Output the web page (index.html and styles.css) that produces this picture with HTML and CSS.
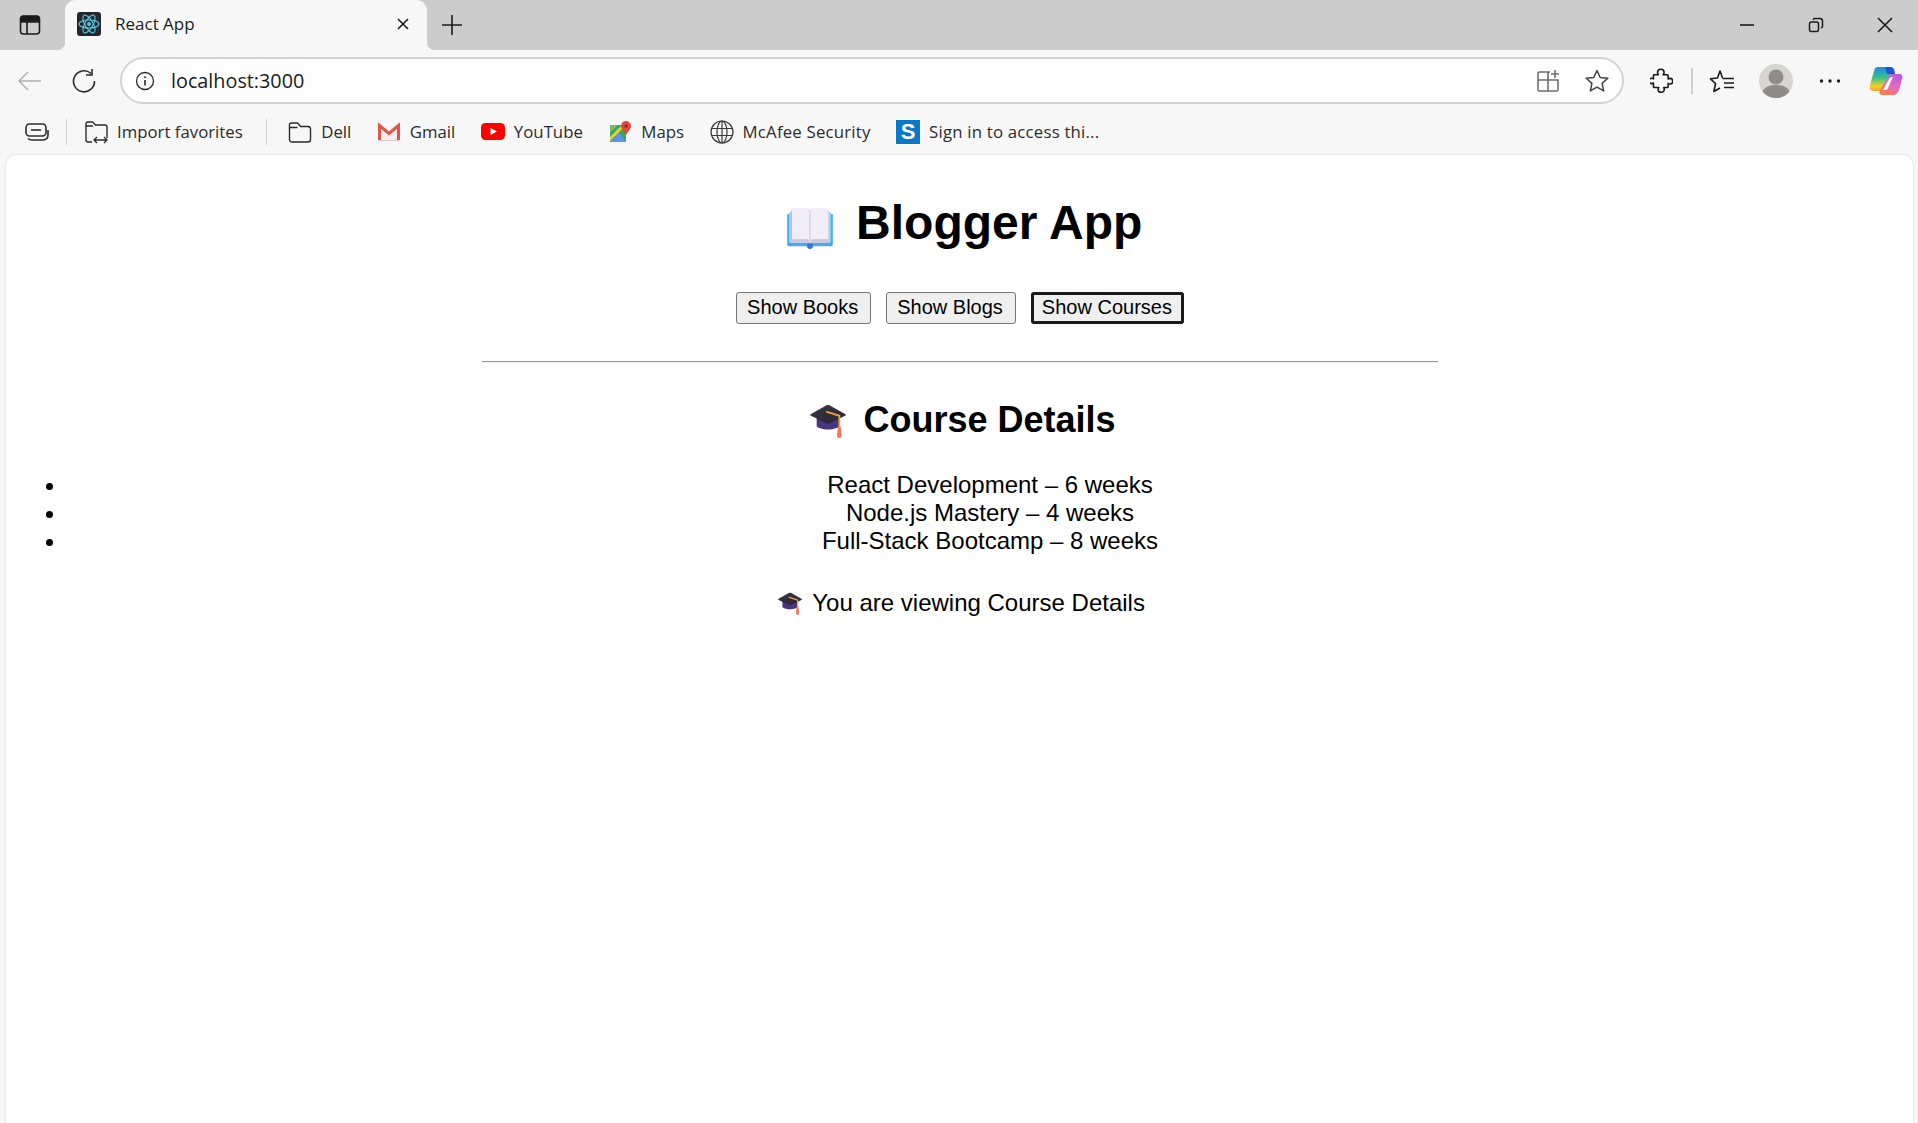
FILE: index.html
```html
<!DOCTYPE html>
<html lang="en">

<head>
    <meta charset="UTF-8">
    <title>React App</title>
    <link rel="stylesheet" href="styles.css">
</head>

<body>
    <!-- tab strip -->
    <div class="tabstrip">
        <span class="tab-side">
            <svg width="22" height="22" viewBox="0 0 22 22" fill="none" stroke="#1b1b1b" stroke-width="1.6"><rect x="1.5" y="2" width="19" height="18" rx="3"/><path d="M1.5 8h19M8 8v12"/><path d="M2 7V4.5A2 2 0 0 1 4 2.500h14a2 2 0 0 1 2 2V7z" fill="#1b1b1b"/></svg>
        </span>
        <div class="tab">
            <svg class="favicon" width="24" height="24" viewBox="0 0 24 24" fill="none"><rect width="24" height="24" rx="3" fill="#23272f"/><g stroke="#58c4dc" stroke-width="1.2"><ellipse cx="12" cy="12" rx="10" ry="4"/><ellipse cx="12" cy="12" rx="10" ry="4" transform="rotate(60 12 12)"/><ellipse cx="12" cy="12" rx="10" ry="4" transform="rotate(120 12 12)"/></g><circle cx="12" cy="12" r="2" fill="#58c4dc"/></svg>
            <span class="tab-title">React App</span>
            <svg class="tab-close" width="14" height="14" viewBox="0 0 14 14" stroke="#1b1b1b" stroke-width="1.6"><path d="M2 2l10 10M12 2L2 12"/></svg>
        </div>
        <svg class="tab-new" width="22" height="22" viewBox="0 0 22 22" stroke="#1b1b1b" stroke-width="1.6"><path d="M11 1v20M1 11h20"/></svg>
        <div class="win-controls">
            <svg width="16" height="16" viewBox="0 0 16 16" stroke="#1b1b1b" stroke-width="1.6"><path d="M1 8h14"/></svg>
            <svg width="16" height="16" viewBox="0 0 16 16" fill="none" stroke="#1b1b1b" stroke-width="1.5"><rect x="1.500" y="5" width="9" height="9.500" rx="2"/><path d="M5 2.800A2 2 0 0 1 7 1.500h5A2.500 2.500 0 0 1 14.500 4v5a2 2 0 0 1-1.300 2"/></svg>
            <svg width="16" height="16" viewBox="0 0 16 16" stroke="#1b1b1b" stroke-width="1.6"><path d="M1 1l14 14M15 1L1 15"/></svg>
        </div>
    </div>

    <!-- address bar -->
    <div class="toolbar">
        <span class="tool-btn">
            <svg width="24" height="24" viewBox="0 0 24 24" fill="none" stroke="#b0b0b0" stroke-width="1.500"><path d="M23 12H1M10 3l-9 9 9 9"/></svg>
        </span>
        <span class="tool-btn tool-refresh">
            <svg width="26" height="26" viewBox="0 0 26 26" fill="none" stroke="#2b2b2b" stroke-width="1.600"><path d="M20 5.500A10.500 10.500 0 1 0 23.500 13"/><path d="M21 1v6h-6"/></svg>
        </span>
        <div class="address">
            <svg class="info-icon" width="20" height="20" viewBox="0 0 20 20" fill="none" stroke="#2b2b2b" stroke-width="1.300"><circle cx="10" cy="10" r="8.500"/><path d="M10 9v5.500" stroke-width="1.600"/><circle cx="10" cy="6.200" r="1" fill="#2b2b2b" stroke="none"/></svg>
            <span class="address-text">localhost:3000</span>
            <svg class="grid-icon" width="24" height="24" viewBox="0 0 24 24" fill="none" stroke="#6e6e6e" stroke-width="1.600"><path d="M14 3H3.500A1.500 1.500 0 0 0 2 4.500v16A1.500 1.500 0 0 0 3.500 22h17a1.500 1.500 0 0 0 1.500-1.500V11H2M12 3v19"/><path d="M19 1v8M15 5h8"/></svg>
            <svg class="star-icon" width="26" height="26" viewBox="0 0 26 26" fill="none" stroke="#444" stroke-width="1.500" stroke-linejoin="round"><path d="M13 2.500l3.200 7 7.600.8-5.700 5.100 1.600 7.500-6.700-3.800-6.700 3.800 1.600-7.500-5.700-5.100 7.600-.8z"/></svg>
        </div>
        <div class="tool-right">
            <span class="tool-btn">
                <svg width="23" height="25" viewBox="0 0 26 28" fill="none" stroke="#1b1b1b" stroke-width="1.800" stroke-linejoin="round"><path d="M4.500 7.500h5c-.6-.9-1-1.600-1-2.500a3.700 3.700 0 0 1 7.400 0c0 .9-.4 1.600-1 2.500h4.600a1 1 0 0 1 1 1v3.800c.8-.5 1.300-.7 2-.7a3.200 3.200 0 0 1 0 6.400c-.7 0-1.200-.2-2-.7v3.700a1 1 0 0 1-1 1h-4c.5.800.7 1.300.7 1.900a3.500 3.500 0 0 1-7 0c0-.6.200-1.100.7-1.900h-5a1 1 0 0 1-1-1v-4.200c-.8.500-1.300.7-1.900.7a3 3 0 0 1 0-6c.6 0 1.100.2 1.900.7V8.500a1 1 0 0 1 1-1z"/></svg>
            </span>
            <span class="tool-sep"></span>
            <span class="tool-btn">
                <svg width="26" height="26" viewBox="0 0 26 26" fill="none" stroke="#1b1b1b" stroke-width="1.600" stroke-linejoin="round"><path d="M13.500 10V10L11 3 8.500 10 1.500 10.800l5 4.700-1.600 8 6.100-3.500"/><path d="M13.500 10.500H25M15 15h10M15 19.500h10" stroke-width="1.500"/></svg>
            </span>
            <span class="tool-btn">
                <svg width="34" height="34" viewBox="0 0 34 34"><circle cx="17" cy="17" r="17" fill="#d6d5d2"/><circle cx="17" cy="13" r="7.500" fill="#8f8b87"/><path d="M3.500 27.500C6 22.500 11 21 17 21s11 1.500 13.500 6.500A16.500 16.500 0 0 1 17 34 16.500 16.500 0 0 1 3.500 27.500z" fill="#8f8b87"/></svg>
            </span>
            <span class="tool-btn">
                <svg width="22" height="6" viewBox="0 0 22 6" fill="#1b1b1b"><circle cx="2.500" cy="3" r="1.700"/><circle cx="11" cy="3" r="1.700"/><circle cx="19.500" cy="3" r="1.700"/></svg>
            </span>
            <span class="tool-btn tool-copilot">
                <svg width="34" height="32" viewBox="0 0 34 32">
                    <defs>
                        <linearGradient id="cpLeft" x1="0.300" y1="0" x2="0.300" y2="1"><stop offset="0" stop-color="#1f8be0"/><stop offset="0.450" stop-color="#37c28b"/><stop offset="0.800" stop-color="#f4d31f"/><stop offset="1" stop-color="#f2a23a"/></linearGradient>
                        <linearGradient id="cpRight" x1="0.800" y1="0" x2="0.200" y2="1"><stop offset="0" stop-color="#b65be0"/><stop offset="0.550" stop-color="#e66ac0"/><stop offset="1" stop-color="#f6813a"/></linearGradient>
                    </defs>
                    <path d="M9 2h12c3 0 2 3 1 5l-7 16c-1 2-2 3-5 3H5c-3 0-5-2-4-6L5 6c.6-2.500 2-4 4-4z" fill="url(#cpLeft)"/>
                    <path d="M16 2h5c3 0 4 2 4.500 4l.5 3h-8z" fill="#1858d0"/>
                    <path d="M22 9h8c3 0 4 2 3 5l-3 11c-1 3-3 5-6 5H13c-3 0-3-3-2-5l8-13c1-2 2-3 3-3z" fill="url(#cpRight)"/>
                    <path d="M15 23l5-9c.500-1 1.500-2 3-2h1l-5 11c-.500 1-1.500 2-3 2h-2z" fill="#fff"/>
                </svg>
            </span>
        </div>
    </div>

    <!-- favorites bar -->
    <div class="favbar">
        <svg class="fav-first" width="24" height="20" viewBox="0 0 24 20" fill="none" stroke="#2b2b2b" stroke-width="1.600"><rect x="1" y="2" width="20" height="12" rx="3.500"/><path d="M6 8h10"/><path d="M3 16.500c1 1 2 1.500 4 1.500h10c4 0 6-2 6-5V8"/></svg>
        <span class="fav-sep"></span>
        <div class="fav-item">
            <svg width="24" height="24" viewBox="0 0 24 24" fill="none" stroke="#2b2b2b" stroke-width="1.400" stroke-linejoin="round"><path d="M8 22H4a2 2 0 0 1-2-2V4a2 2 0 0 1 2-2h4.500l3 3H21a2 2 0 0 1 2 2v11M2 6h7"/><path d="M10 20h13M13 17l-3 3 3 3M20 17l3 3-3 3" stroke-width="1.300"/></svg>
            <span>Import favorites</span>
        </div>
        <span class="fav-sep fav-sep-2"></span>
        <div class="fav-item">
            <svg width="24" height="24" viewBox="0 0 24 24" fill="none" stroke="#2b2b2b" stroke-width="1.400" stroke-linejoin="round"><path d="M3 3h6.500l3 3.500H20a2.500 2.500 0 0 1 2.500 2.500v10.500A2.500 2.500 0 0 1 20 22H4a2.500 2.500 0 0 1-2.500-2.500V4.500A1.500 1.500 0 0 1 3 3zM1.500 7.500h8"/></svg>
            <span>Dell</span>
        </div>
        <div class="fav-item">
            <svg width="24" height="20" viewBox="0 0 24 20" fill="none"><path d="M1 3v15h22V3L19.500 1.500 12 8 4.500 1.500z" fill="#f6eeee"/><path d="M2.500 18V3.500l9.500 8 9.500-8V18" stroke="#e0564a" stroke-width="3"/><path d="M2 18.500h20" stroke="#d9c8c6" stroke-width="1"/></svg>
            <span>Gmail</span>
        </div>
        <div class="fav-item">
            <svg width="24" height="20" viewBox="0 0 24 20"><rect y="1" width="24" height="17" rx="4.500" fill="#ff0000"/><path d="M9.500 6l6.500 3.500-6.500 3.500z" fill="#fff"/></svg>
            <span>YouTube</span>
        </div>
        <div class="fav-item">
            <svg width="24" height="24" viewBox="0 0 24 24"><path d="M2 5h16v17H2z" fill="#35a853"/><path d="M2 22l9-10 7 10z" fill="#5b94ee"/><path d="M2 17L14 5h4L2 21z" fill="#f4cf3a"/><path d="M2 5h8L2 13z" fill="#79b972"/><path d="M18 1a5 5 0 0 1 5 5c0 3-3.500 5.500-5 9.500-1.500-4-5-6.500-5-9.500a5 5 0 0 1 5-5z" fill="#e2483d"/><circle cx="18" cy="6" r="1.700" fill="#8e2a22"/></svg>
            <span>Maps</span>
        </div>
        <div class="fav-item fav-wide">
            <svg width="24" height="24" viewBox="0 0 24 24" fill="none" stroke="#3a3a3a" stroke-width="1.200"><circle cx="12" cy="12" r="11"/><ellipse cx="12" cy="12" rx="5" ry="11"/><path d="M12 1v22M1.500 8.500h21M1.500 15.500h21"/></svg>
            <span>McAfee Security</span>
        </div>
        <div class="fav-item fav-wide">
            <span class="s-logo">S</span>
            <span>Sign in to access thi...</span>
        </div>
    </div>

    <!-- page -->
    <div class="page">
        <h1 class="title">
            <svg class="title-icon" width="48" height="42" viewBox="0 0 50 46">
                <path d="M0 8h3v31h44V8h3v33a2 2 0 0 1-2 2H29l-2 2h-4l-2-2H2a2 2 0 0 1-2-2z" fill="#4da6f0"/>
                <path d="M2 6h2v33h42V6h2v33H2z" fill="#80d4fb"/>
                <path d="M5 3c0-1 1-2 3-2h14c2 0 3 1 3 3v34H5z" fill="#f0ecf8"/>
                <path d="M25 4c0-2 1-3 3-3h14c2 0 3 1 3 2v35H25z" fill="#f1edf9"/>
                <path d="M5 3v35h-1V5z" fill="#a9a3b8"/>
                <path d="M45 3v35h1V5z" fill="#c9c3d8"/>
                <path d="M4 35h17c2 0 4 1 4 3 0-2 2-3 4-3h17v4H29l-2 1h-4l-2-1H4z" fill="#cfc8dc"/>
                <path d="M24 3h2v35h-2z" fill="#dcd6e8"/>
                <path d="M22 40h6v3c0 2-1 3-3 3s-3-1-3-3z" fill="#2f75d6"/>
            </svg> Blogger App
        </h1>

        <div class="btn-row">
            <button class="nav-btn">Show Books</button>
            <button class="nav-btn">Show Blogs</button>
            <button class="nav-btn nav-btn-focus">Show Courses</button>
        </div>

        <hr class="rule">

        <h2 class="subtitle">
            <svg class="sub-icon" width="38" height="34" viewBox="0 0 38 36">
                <defs>
                    <linearGradient id="capBoard" x1="0" y1="0" x2="1" y2="1"><stop offset="0" stop-color="#3a3644"/><stop offset="1" stop-color="#2a2433"/></linearGradient>
                </defs>
                <path d="M7 12h24v11c0 2-6 4-12 4S7 25 7 23z" fill="#4a3580"/>
                <path d="M17 1.500c1-.5 3-.5 4 0l16 9c1 .5 1 1.500 0 2l-16 8c-1 .5-3 .5-4 0l-16-8c-1-.5-1-1.500 0-2z" fill="url(#capBoard)"/>
                <path d="M17 8l14 4.500V24" fill="none" stroke="#e8a33d" stroke-width="2"/>
                <path d="M29.500 24h3l1 9c0 2-1 3-2.500 3s-2.500-1-2.500-3z" fill="#f2795c"/>
            </svg> Course Details
        </h2>

        <ul class="course-list">
            <li>React Development – 6 weeks</li>
            <li>Node.js Mastery – 4 weeks</li>
            <li>Full-Stack Bootcamp – 8 weeks</li>
        </ul>

        <p class="status">
            <svg class="status-icon" width="24" height="23" viewBox="0 0 38 36">
                <path d="M7 12h24v11c0 2-6 4-12 4S7 25 7 23z" fill="#4a3580"/>
                <path d="M17 1.500c1-.5 3-.5 4 0l16 9c1 .5 1 1.500 0 2l-16 8c-1 .5-3 .5-4 0l-16-8c-1-.5-1-1.500 0-2z" fill="url(#capBoard)"/>
                <path d="M17 8l14 4.500V24" fill="none" stroke="#e8a33d" stroke-width="2"/>
                <path d="M29.500 24h3l1 9c0 2-1 3-2.500 3s-2.500-1-2.500-3z" fill="#f2795c"/>
            </svg> You are viewing Course Details
        </p>
    </div>
</body>

</html>
```

FILE: styles.css
```css
html, body { height: 100%; }
body {
    margin: 0;
    display: flex;
    flex-direction: column;
    overflow: hidden;
    background: #f7f7f7;
    color: #000;
    font-family: "Liberation Sans", Arial, sans-serif;
}

/* tab strip */
.tabstrip {
    display: flex;
    align-items: center;
    flex: none;
    height: 50px;
    background: #cccccc;
}
.tab-side { display: flex; margin-left: 19px; margin-bottom: 1px; }
.tab {
    position: relative;
    display: flex;
    align-items: center;
    align-self: stretch;
    box-sizing: border-box;
    width: 362px;
    margin-left: 24px;
    padding: 0 17px 3px 12px;
    border-radius: 10px 10px 0 0;
    background: #f7f7f7;
    font-family: "Open Sans", sans-serif;
    font-size: 17px;
    color: #1b1b1b;
}
.tab::before,
.tab::after {
    content: "";
    position: absolute;
    bottom: 0;
    width: 8px;
    height: 8px;
}
.tab::before { left: -8px; background: radial-gradient(circle at 0 0, transparent 8px, #f7f7f7 8.500px); }
.tab::after { right: -8px; background: radial-gradient(circle at 100% 0, transparent 8px, #f7f7f7 8.500px); }
.favicon { flex: none; }
.tab-title { margin-left: 14px; flex: 1; }
.tab-close { flex: none; }
.tab-new { margin-left: 14px; margin-bottom: 1px; }
.win-controls {
    display: flex;
    gap: 53px;
    margin-left: auto;
    margin-right: 25px;
}

/* toolbar */
.toolbar {
    display: flex;
    align-items: center;
    flex: none;
    height: 61px;
    padding-left: 8px;
}
.tool-btn {
    display: flex;
    align-items: center;
    justify-content: center;
    flex: none;
    width: 44px;
    height: 40px;
}
.tool-refresh { margin-left: 10px; }
.address {
    display: flex;
    align-items: center;
    box-sizing: border-box;
    width: 1504px;
    height: 47px;
    margin-left: 14px;
    padding: 0 12px 0 13px;
    border: 2px solid #d2d2d2;
    border-radius: 24px;
    background: #fdfdfd;
}
.address-text {
    flex: 1;
    margin-left: 16px;
    font-family: "Open Sans", sans-serif;
    font-size: 19.800px;
    color: #1b1b1b;
}
.star-icon { margin-left: 24px; }
.tool-right {
    display: flex;
    align-items: center;
    margin-left: 15px;
    gap: 10px;
}
.tool-sep { width: 2px; height: 26px; margin: 0 -3px 0 -2px; background: #cfcfcf; }
.tool-copilot { margin-left: 2px; }

/* favorites */
.favbar {
    display: flex;
    align-items: center;
    flex: none;
    height: 41px;
    padding: 0 0 3px 25px;
    font-family: "Open Sans", sans-serif;
    font-size: 16.800px;
    color: #2b2b2b;
}
.fav-sep { width: 1px; height: 26px; margin: 0 17px; background: #cfcfcf; }
.fav-sep-2 { margin: 0 21px 0 -2px; }
.fav-item {
    display: flex;
    align-items: center;
    gap: 9px;
    margin-right: 25.500px;
    white-space: nowrap;
}
.fav-wide { letter-spacing: 0.200px; }
.fav-item svg { flex: none; }
.s-logo {
    display: flex;
    align-items: center;
    justify-content: center;
    width: 24px;
    height: 24px;
    background: #0a78c8;
    color: #fff;
    font-family: "Liberation Sans", sans-serif;
    font-weight: bold;
    font-size: 22px;
}

/* page */
.page {
    flex: 1;
    min-height: 0;
    margin: 0 5px 0 6px;
    border-radius: 10px 10px 0 0;
    background: #fff;
    box-shadow: 0 0 2px rgba(0, 0, 0, 0.2);
}
.title {
    margin: 40px 0 0;
    text-align: center;
    font-size: 48px;
    line-height: 55px;
}
.title-icon { margin: 0 9px; vertical-align: -10px; }
.btn-row {
    display: flex;
    justify-content: center;
    gap: 15px;
    margin: 42px 0 0 1px;
}
.nav-btn {
    box-sizing: border-box;
    height: 32px;
    padding: 0 12px 2px 10px;
    border: 1px solid #767676;
    border-radius: 3px;
    background: #efefef;
    font-family: "Liberation Sans", sans-serif;
    font-size: 20px;
    color: #000;
}
.nav-btn-focus { padding: 0 11px 2px 10px; outline: 3px solid #1a1a1a; outline-offset: -3px; }
.rule {
    width: 956px;
    margin: 37px auto 0;
    border: none;
    border-top: 1px solid #9a9a9a;
    border-bottom: 1px solid #eee;
}
.subtitle {
    margin: 36px 0 0;
    text-align: center;
    font-size: 36px;
    line-height: 41px;
}
.sub-icon { margin: 0 6px; vertical-align: -6px; }
.course-list {
    margin: 31px 0 0;
    padding-left: 61px;
    text-align: center;
    font-size: 24px;
    line-height: 28px;
}
.status {
    margin: 34px 0 0;
    text-align: center;
    font-size: 24px;
    line-height: 28px;
}
.status-icon { margin: 0 4px; vertical-align: -4px; }
```
